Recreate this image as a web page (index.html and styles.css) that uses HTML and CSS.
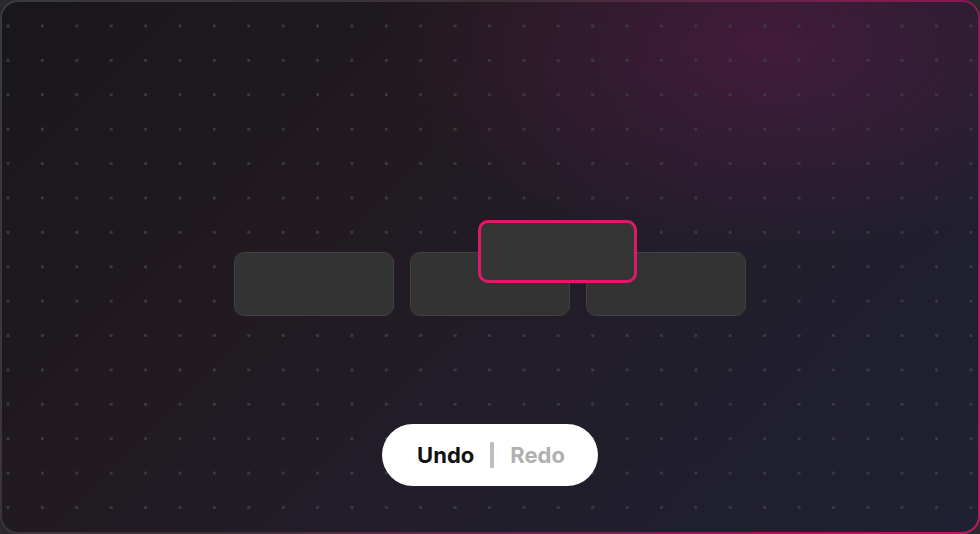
FILE: index.html
```html
<!DOCTYPE html>
<html lang="en">
<head>
<meta charset="utf-8">
<title>Undo Redo</title>
<link rel="stylesheet" href="styles.css">
</head>
<body>
<div class="frame">
  <div class="canvas">
    <div class="row">
      <div class="card"></div>
      <div class="card"></div>
      <div class="card"></div>
      <div class="card card-drag"></div>
    </div>
    <div class="pill">
      <span class="action active">Undo</span>
      <span class="divider"></span>
      <span class="action muted">Redo</span>
    </div>
  </div>
</div>
</body>
</html>
```
FILE: styles.css
```css
html, body {
  margin: 0;
  padding: 0;
  background: #2a2a2c;
}
body {
  width: 980px;
  height: 534px;
  overflow: hidden;
  font-family: Inter, "Noto Sans", sans-serif;
}
.frame {
  box-sizing: border-box;
  width: 980px;
  height: 534px;
  border-radius: 18px;
  padding: 2px;
  background: linear-gradient(120deg, #3a3a3c 0%, #3a3036 40%, #8a1a55 75%, #c0185e 100%);
}
.canvas {
  position: relative;
  box-sizing: border-box;
  height: 100%;
  border-radius: 16px;
  overflow: hidden;
  background-color: #1b191c;
  background-image:
    radial-gradient(circle, #3b3a40 1.3px, transparent 1.9px),
    radial-gradient(ellipse 55% 55% at 78% 8%, rgba(150, 25, 110, 0.28), transparent 70%),
    linear-gradient(135deg, #19171a 0%, #211a20 35%, #221d2a 60%, #1e2131 100%);
  background-size: 34.4px 34.4px, 100% 100%, 100% 100%;
  background-position: -11.2px 6.8px, 0 0, 0 0;
  display: flex;
  flex-direction: column;
  align-items: center;
  padding-top: 250px;
}
.row {
  position: relative;
  display: flex;
  gap: 16px;
}
.card {
  box-sizing: border-box;
  width: 160px;
  height: 64px;
  border-radius: 10px;
  background: #333333;
  border: 1px solid #414141;
}
.card-drag {
  position: absolute;
  left: 244px;
  top: -32px;
  width: 159px;
  height: 63px;
  background: #353535;
  border: 3px solid #e0186c;
}
.pill {
  margin-top: 108px;
  box-sizing: border-box;
  width: 216px;
  height: 62px;
  border-radius: 31px;
  background: #ffffff;
  display: flex;
  align-items: center;
  justify-content: center;
  gap: 16px;
  font-size: 22px;
  font-weight: 700;
  padding-left: 2px;
}
.action.active { color: #111111; }
.action.muted { color: #b0b0b0; }
.divider {
  width: 4px;
  height: 26px;
  border-radius: 1px;
  background: #bdbdbd;
}
```
